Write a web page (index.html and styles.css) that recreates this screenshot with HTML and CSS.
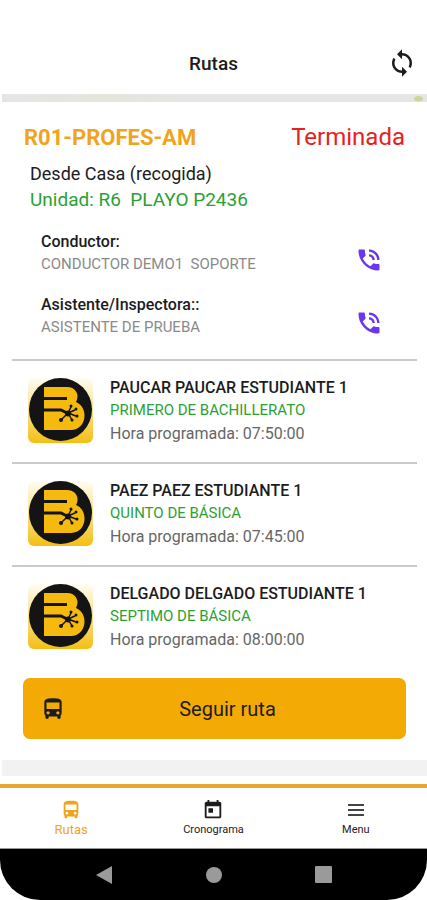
FILE: index.html
```html
<!DOCTYPE html>
<html lang="es">
<head>
  <meta charset="UTF-8" />
  <meta name="viewport" content="width=device-width, initial-scale=1.0"/>
  <title>Rutas</title>
  <link rel="stylesheet" href="styles.css">
</head>
<body>
  <!-- Shared icons -->
  <svg class="sprite" aria-hidden="true">
    <symbol id="icon-bus" viewBox="0 0 24 24">
      <path fill-rule="evenodd" d="M4 16c0 .88.39 1.67 1 2.22V20c0 .55.45 1 1 1h1c.55 0 1-.45 1-1v-1h8v1c0 .55.45 1 1 1h1c.55 0 1-.45 1-1v-1.78c.61-.55 1-1.34 1-2.22V6c0-3.5-3.58-4-8-4s-8 .5-8 4v10zm3.5 1c-.83 0-1.5-.67-1.5-1.5S6.67 14 7.5 14s1.5.67 1.5 1.5S8.33 17 7.5 17zm9 0c-.83 0-1.5-.67-1.5-1.5s.67-1.5 1.5-1.5 1.5.67 1.5 1.5-.67 1.5-1.5 1.5zM18 12H6V6h12v6z"/>
    </symbol>
    <symbol id="icon-phone" viewBox="0 0 24 24">
      <path d="M20 15.5c-1.25 0-2.45-.2-3.57-.57-.35-.11-.74-.03-1.02.24l-2.2 2.2c-2.83-1.44-5.15-3.75-6.59-6.59l2.2-2.21c.28-.26.36-.65.25-1C8.7 6.45 8.5 5.25 8.5 4c0-.55-.45-1-1-1H4c-.55 0-1 .45-1 1 0 9.39 7.61 17 17 17 .55 0 1-.45 1-1v-3.5c0-.55-.45-1-1-1zM19 12h2c0-4.97-4.03-9-9-9v2c3.87 0 7 3.13 7 7zm-4 0h2c0-2.76-2.24-5-5-5v2c1.66 0 3 1.34 3 3z"/>
    </symbol>
    <symbol id="icon-student" viewBox="0 0 66 66">
      <defs>
        <linearGradient id="tile" x1="0" y1="0" x2="0" y2="1">
          <stop offset="0" stop-color="#fffdf2"/>
          <stop offset="0.5" stop-color="#fae08a"/>
          <stop offset="1" stop-color="#f3bf13"/>
        </linearGradient>
      </defs>
      <rect x="0" y="0" width="65" height="65" rx="6" fill="url(#tile)"/>
      <circle cx="32.5" cy="31.5" r="31.5" fill="#141414"/>
      <path fill="#f6b90d" d="M16 9h23c9 0 13 8 9 15 13 5 11 28-5 28H16z"/>
      <g fill="none" stroke="#141414">
        <path stroke-width="3" d="M16 20.500h23M16 32h17l6 3"/>
        <path stroke-width="1.5" d="M40 35l3-6M40 35l7-3M40 35l8 3M40 35l4 7M40 35l-7 7"/>
      </g>
      <g fill="#141414">
        <circle cx="40" cy="35.5" r="3"/>
        <circle cx="43" cy="28" r="1.5"/>
        <circle cx="48" cy="31" r="1.5"/>
        <circle cx="49" cy="38" r="1.5"/>
        <circle cx="44" cy="42" r="1.5"/>
        <circle cx="33" cy="42" r="2"/>
      </g>
    </symbol>
  </svg>

  <div class="app">
    <header class="header">
      <h1>Rutas</h1>
      <button class="icon-btn" aria-label="Actualizar">
        <svg class="icon-sync" viewBox="0 0 24 24"><path d="M12 4V1L8 5l4 4V6c3.31 0 6 2.69 6 6 0 1.01-.25 1.97-.7 2.8l1.46 1.46C19.54 15.03 20 13.57 20 12c0-4.42-3.58-8-8-8zm0 14c-3.31 0-6-2.69-6-6 0-1.01.25-1.97.7-2.8L5.24 7.74C4.46 8.97 4 10.43 4 12c0 4.42 3.58 8 8 8v3l4-4-4-4v3z"/></svg>
      </button>
    </header>

    <div class="map-strip"></div>

    <main class="route">
      <div class="route-head">
        <h2>R01-PROFES-AM</h2>
        <span class="status">Terminada</span>
      </div>
      <div class="route-info">
        <p>Desde Casa (recogida)</p>
        <p class="unit">Unidad: R6&nbsp; PLAYO P2436</p>
      </div>

      <div class="contact">
        <div class="contact-text">
          <h3>Conductor:</h3>
          <p>CONDUCTOR DEMO1&nbsp; SOPORTE</p>
        </div>
        <button class="icon-btn" aria-label="Llamar al conductor"><svg class="icon-phone"><use href="#icon-phone"/></svg></button>
      </div>
      <div class="contact">
        <div class="contact-text">
          <h3>Asistente/Inspectora::</h3>
          <p>ASISTENTE DE PRUEBA</p>
        </div>
        <button class="icon-btn" aria-label="Llamar al asistente"><svg class="icon-phone"><use href="#icon-phone"/></svg></button>
      </div>

      <ul class="students">
        <li class="student">
          <svg class="avatar"><use href="#icon-student"/></svg>
          <div>
            <h3>PAUCAR PAUCAR ESTUDIANTE 1</h3>
            <p class="grade">PRIMERO DE BACHILLERATO</p>
            <p class="time">Hora programada: 07:50:00</p>
          </div>
        </li>
        <li class="student">
          <svg class="avatar"><use href="#icon-student"/></svg>
          <div>
            <h3>PAEZ PAEZ ESTUDIANTE 1</h3>
            <p class="grade">QUINTO DE BÁSICA</p>
            <p class="time">Hora programada: 07:45:00</p>
          </div>
        </li>
        <li class="student">
          <svg class="avatar"><use href="#icon-student"/></svg>
          <div>
            <h3>DELGADO DELGADO ESTUDIANTE 1</h3>
            <p class="grade">SEPTIMO DE BÁSICA</p>
            <p class="time">Hora programada: 08:00:00</p>
          </div>
        </li>
      </ul>

      <button class="follow-btn">
        <svg class="icon-bus"><use href="#icon-bus"/></svg>
        <span>Seguir ruta</span>
      </button>
    </main>

    <div class="list-gap"></div>

    <nav class="tabs">
      <a href="#" class="tab active">
        <svg><use href="#icon-bus"/></svg>
        Rutas
      </a>
      <a href="#" class="tab">
        <svg viewBox="0 0 24 24"><path fill-rule="evenodd" d="M19 3h-1V1h-2v2H8V1H6v2H5c-1.11 0-1.99.9-1.99 2L3 19c0 1.1.89 2 2 2h14c1.1 0 2-.9 2-2V5c0-1.1-.9-2-2-2zm0 16H5V8h14v11zM7 10h5v5H7z"/></svg>
        Cronograma
      </a>
      <a href="#" class="tab">
        <svg class="icon-menu" viewBox="0 0 22 22"><path d="M3 5h16v2H3zM3 10h16v2H3zM3 15h16v2H3z"/></svg>
        Menu
      </a>
    </nav>

    <div class="system-bar">
      <button class="icon-btn" aria-label="Atrás"><svg viewBox="0 0 18 18"><path d="M17 0v18L1 9z"/></svg></button>
      <button class="icon-btn" aria-label="Inicio"><svg viewBox="0 0 18 18"><circle cx="9" cy="9" r="8"/></svg></button>
      <button class="icon-btn" aria-label="Recientes"><svg viewBox="0 0 18 18"><rect width="17" height="17" rx="1"/></svg></button>
    </div>
  </div>
</body>
</html>
```

FILE: styles.css
```css
* { margin: 0; padding: 0; box-sizing: border-box; }

body {
  font-family: Roboto, sans-serif;
  background: #fff;
  color: #1c1c1c;
}

ul { list-style: none; }

svg {
  display: block;
  fill: currentColor;
}

.sprite {
  position: absolute;
  width: 0;
  height: 0;
}

.app {
  min-height: 100vh;
  display: flex;
  flex-direction: column;
}

.icon-btn {
  background: none;
  border: none;
  color: inherit;
  cursor: pointer;
}

/* Header */
.header {
  display: grid;
  grid-template-columns: 1fr auto 1fr;
  align-items: center;
  padding: 43px 10px 11px;
  height: 94px;
}

.header h1 {
  grid-column: 2;
  font-size: 19px;
  font-weight: 500;
}

.header .icon-btn { justify-self: end; }

.icon-sync {
  width: 30px;
  height: 30px;
}

.map-strip {
  height: 8px;
  margin-left: 2px;
  background: radial-gradient(ellipse 5px 3px at 98% 60%, #ccd49a 80%, transparent),
    linear-gradient(90deg, #e5e5e5, #e4e6dc 25%, #e5e5e5 45%);
}

/* Route card */
.route {
  padding: 19px 10px 21px 12px;
}

.route-head {
  display: flex;
  justify-content: space-between;
  align-items: center;
  height: 32px;
  padding: 0 12px;
}

.route-head h2 {
  font-size: 22px;
  font-weight: 700;
  color: #f0a41c;
}

.status {
  font-size: 24px;
  color: #e8211d;
}

.route-info {
  padding: 8px 18px 15px;
  font-size: 18px;
  line-height: 26px;
}

.unit {
  font-size: 19px;
  color: #2ba134;
}

.contact {
  display: flex;
  justify-content: space-between;
  align-items: center;
  height: 63px;
  padding: 0 34px 0 29px;
  line-height: 23px;
}

.contact-text {
  align-self: flex-start;
  padding-top: 2px;
}

.contact h3 {
  font-size: 16px;
  font-weight: 500;
}

.contact p {
  font-size: 15px;
  color: #8a8a8a;
}

.icon-phone {
  width: 28px;
  height: 28px;
  color: #6a37ee;
}

/* Students */
.students { margin-top: 5px; }

.student {
  display: flex;
  align-items: center;
  gap: 16px;
  padding: 15px 16px 17px;
  border-top: 2px solid #cacaca;
  line-height: 23px;
}

.avatar {
  width: 66px;
  height: 66px;
}

.student h3 {
  font-size: 16px;
  font-weight: 500;
}

.grade {
  font-size: 15px;
  color: #2ba134;
}

.time {
  font-size: 16px;
  color: #666;
}

.follow-btn {
  display: flex;
  align-items: center;
  width: calc(100% - 22px);
  height: 61px;
  margin: 10px 11px 0;
  padding: 0 17px;
  background: #f4aa05;
  color: #1c1c1c;
  border: none;
  border-radius: 7px;
  font-family: inherit;
  font-size: 20px;
  cursor: pointer;
}

.follow-btn span { flex: 1; }

.icon-bus {
  width: 26px;
  height: 26px;
}

.list-gap {
  height: 16px;
  margin: 0 0 8px 2px;
  background: #f2f2f2;
}

/* Bottom tabs */
.tabs {
  display: flex;
  height: 65px;
  margin-top: auto;
  border-top: 4px solid #e9a531;
  border-bottom: 1px solid #999;
}

.tab {
  flex: 1;
  display: flex;
  flex-direction: column;
  align-items: center;
  justify-content: center;
  padding-top: 2px;
  font-size: 11px;
  line-height: 18px;
  color: #1c1c1c;
  text-decoration: none;
}

.tab svg {
  width: 22px;
  height: 22px;
}

.icon-menu { color: #444; }

.tab.active {
  font-size: 13px;
  color: #f0a41c;
}

/* Android system bar */
.system-bar {
  display: flex;
  justify-content: center;
  align-items: center;
  gap: 92px;
  height: 51px;
  background: #000;
  color: #9a9a9a;
  border-radius: 0 0 40px 40px;
}

.system-bar svg {
  width: 18px;
  height: 18px;
}
```
